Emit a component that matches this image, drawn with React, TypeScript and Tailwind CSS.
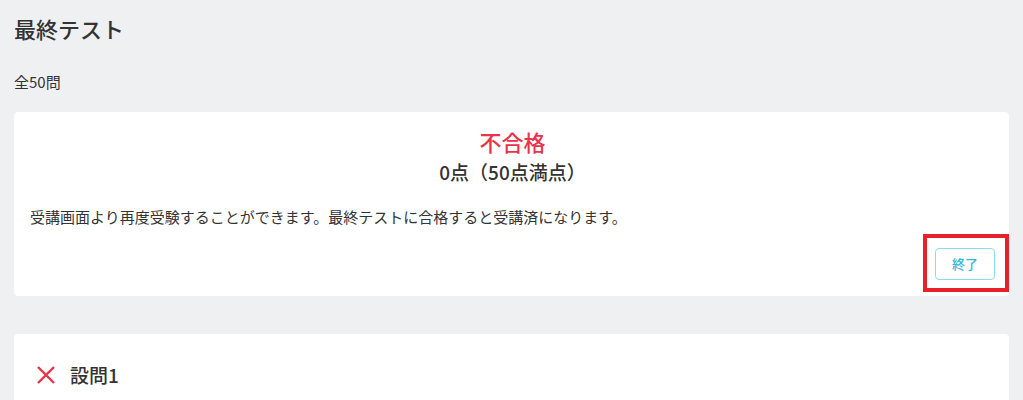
import React from "react";

export default function App() {
  return (
    <div
      className="min-h-[400px] bg-[#eff0f2] px-[14px] pt-[13px] text-[#333]"
      style={{ fontFamily: '"Noto Sans CJK JP", "Noto Sans", sans-serif' }}
    >
      <h1 className="text-[22px] leading-[30px] font-medium">最終テスト</h1>
      <p className="mt-[28px] text-[15px] leading-[22px]">全50問</p>
      <div className="mt-[19px] rounded-[4px] bg-white pl-4 pr-[14px] pt-[14px] pb-[16px]">
        <div className="text-center text-[22px] leading-[30px] font-medium text-[#e8334a]">不合格</div>
        <div className="mt-[3px] text-center text-[19px] leading-[26px] font-medium">0点（50点満点）</div>
        <p className="mt-[21px] text-[15px] leading-[22px]">
          受講画面より再度受験することができます。最終テストに合格すると受講済になります。
        </p>
        <div className="mt-[20px] flex justify-end">
          <div className="relative">
            <button className="box-border block h-[32px] w-[60px] rounded-[4px] border border-[#8ddcec] bg-white text-[13px] leading-[30px] font-medium text-[#36b5d6]">
              終了
            </button>
            <div className="pointer-events-none absolute -left-[12px] -right-[14px] -top-[14px] -bottom-[12px] border-[4px] border-[#e8202a]" />
          </div>
        </div>
      </div>
      <div className="mt-[38px] rounded-t-[4px] bg-white px-[22px] pt-[28px] pb-[20px]">
        <div className="flex items-center gap-[14px]">
          <svg width="20" height="20" viewBox="0 0 20 20">
            <path d="M2 2 L18 18 M18 2 L2 18" stroke="#e8334a" strokeWidth="2.4" />
          </svg>
          <span className="text-[19px] font-medium leading-[26px]">設問1</span>
        </div>
      </div>
    </div>
  );
}
